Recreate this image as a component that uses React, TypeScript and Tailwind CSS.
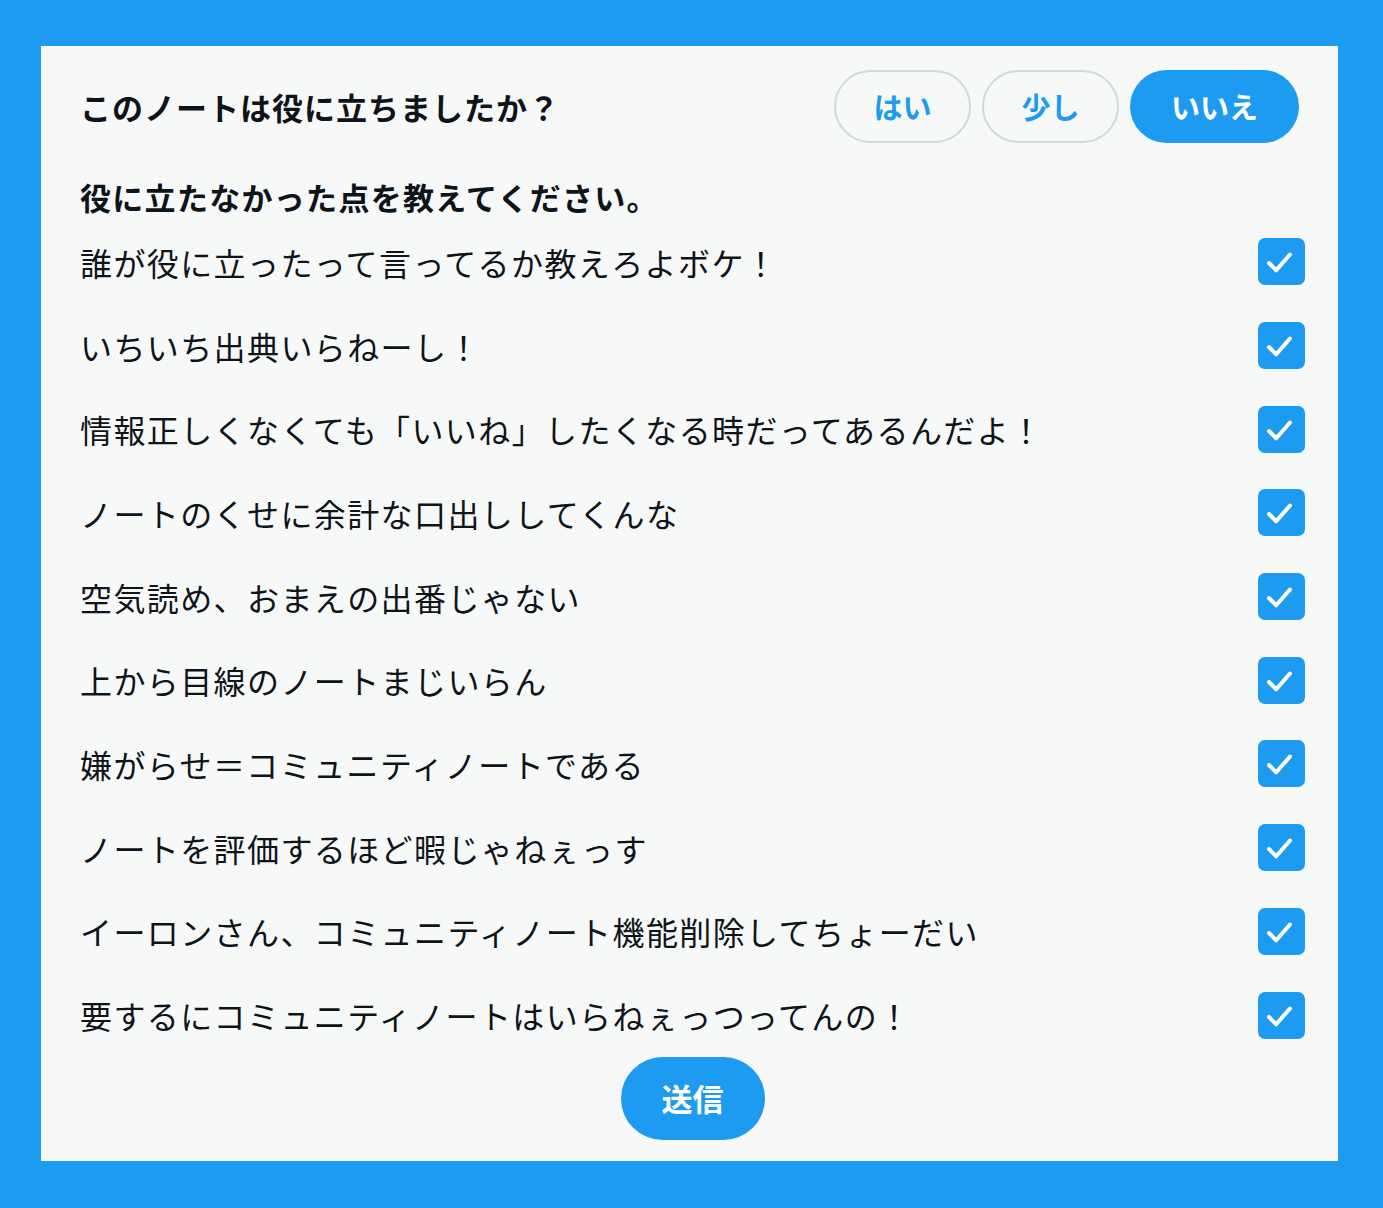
import React from 'react';

const reasons = [
  '誰が役に立ったって言ってるか教えろよボケ！',
  'いちいち出典いらねーし！',
  '情報正しくなくても「いいね」したくなる時だってあるんだよ！',
  'ノートのくせに余計な口出ししてくんな',
  '空気読め、おまえの出番じゃない',
  '上から目線のノートまじいらん',
  '嫌がらせ＝コミュニティノートである',
  'ノートを評価するほど暇じゃねぇっす',
  'イーロンさん、コミュニティノート機能削除してちょーだい',
  '要するにコミュニティノートはいらねぇっつってんの！',
];

function CheckBox() {
  return (
    <div className="w-[47px] h-[47px] rounded-[7px] bg-[#1d9bf0] shrink-0">
      <svg width="47" height="47" viewBox="0 0 47 47" fill="none">
        <path d="M11 25l7.2 7.3L32 16.5" stroke="white" strokeWidth="4" strokeLinecap="round" strokeLinejoin="round" />
      </svg>
    </div>
  );
}

export default function App() {
  return (
    <div
      className="w-[1383px] h-[1208px] bg-[#1d9bf0] pt-[46px] pl-[41px]"
      style={{ fontFamily: '"Noto Sans CJK JP", "Noto Sans", sans-serif' }}
    >
      <div className="w-[1297px] h-[1115px] bg-[#f7f9f9] pl-[39px] pr-[33px] pt-[24px] text-[#0f1419] flex flex-col">
        {/* header */}
        <div className="flex items-center justify-between pr-[6px]">
          <h1 className="text-[31px] font-bold leading-none tracking-[1px]">このノートは役に立ちましたか？</h1>
          <div className="flex gap-[11px]">
            <button className="w-[137px] h-[73px] rounded-full border-2 border-[#cfd9de] text-[#1d9bf0] text-[29px] font-bold">はい</button>
            <button className="w-[137px] h-[73px] rounded-full border-2 border-[#cfd9de] text-[#1d9bf0] text-[29px] font-bold">少し</button>
            <button className="w-[169px] h-[73px] rounded-full bg-[#1d9bf0] text-white text-[29px] font-bold">いいえ</button>
          </div>
        </div>

        <h2 className="mt-[34px] text-[31px] font-bold leading-[40px] tracking-[1.3px]">役に立たなかった点を教えてください。</h2>

        {/* reasons */}
        <div className="mt-[3px] flex flex-col">
          {reasons.map((r, i) => (
            <label key={i} className="h-[83.7px] flex items-center justify-between">
              <span className="text-[32px] leading-none tracking-[1.4px]">{r}</span>
              <CheckBox />
            </label>
          ))}
        </div>

        <div className="flex justify-center">
          <button className="w-[144px] h-[83px] rounded-full bg-[#1d9bf0] text-white text-[31px] font-bold">送信</button>
        </div>
      </div>
    </div>
  );
}
